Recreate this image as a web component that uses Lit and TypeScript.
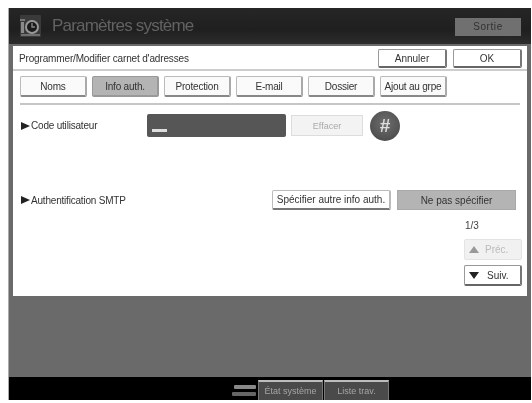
import { LitElement, html, css } from "lit";
import { customElement } from "lit/decorators.js";

@customElement("app-root")
export class AppRoot extends LitElement {
  static styles = css`
    :host {
      display: block;
      width: 532px;
      height: 403px;
      background: #fff;
      overflow: hidden;
      font-family: "Liberation Sans", Arial, sans-serif;
      color: #333;
    }
    .frame {
      margin: 8px 1px 0 9px;
      height: 392px;
      display: flex;
      flex-direction: column;
      background: #6a6a6a;
      filter: blur(0.7px);
      box-shadow: -1px 0 0 #aaa;
    }
    .header {
      height: 36px;
      flex: none;
      display: flex;
      align-items: center;
      background: linear-gradient(#262626, #1f1f1f 60%, #2c2c2c);
      padding: 0 10px 0 11px;
    }
    .logo { width: 21px; height: 24px; flex: none; }
    .title {
      margin-left: 11px;
      font-size: 17px;
      letter-spacing: -0.8px;
      color: #626262;
      white-space: nowrap;
    }
    .exit {
      margin-left: auto;
      margin-top: 1px;
      width: 66px;
      height: 18px;
      background: #707070;
      color: #303030;
      font-size: 10px;
      display: flex;
      align-items: center;
      justify-content: center;
      letter-spacing: 0.6px;
    }
    .panel {
      margin: 2px 4px 0 4px;
      height: 250px;
      flex: none;
      background: #fff;
      position: relative;
      display: flex;
      flex-direction: column;
    }
    .top {
      height: 25px;
      flex: none;
      box-sizing: border-box;
      border-bottom: 2px solid #ccc;
      display: flex;
      align-items: flex-start;
      padding: 3px 5px 0 6px;
      gap: 6px;
    }
    .caption {
      flex: 1;
      font-size: 10px;
      line-height: 19px;
      letter-spacing: -0.15px;
      color: #333;
      white-space: nowrap;
    }
    .btn {
      box-sizing: border-box;
      display: flex;
      align-items: center;
      justify-content: center;
      background: #fff;
      border: 1px solid #999;
      border-right: 2px solid #777;
      border-bottom: 2px solid #666;
      border-radius: 2px;
      font-size: 10px;
      color: #333;
      white-space: nowrap;
      flex: none;
    }
    .top .btn { width: 69px; height: 19px; }
    .tabs {
      display: flex;
      gap: 5px;
      margin: 5px 0 0 7px;
    }
    .tabs .btn { width: 67px; height: 21px; letter-spacing: -0.2px; background: #fafafa; border-color: #bbb; border-bottom-color: #888; border-right-color: #aaa; }
    .tabs .btn.sel { background: #b4b4b4; border-color: #999; }
    .rule { height: 2px; background: #c6c6c6; margin: 6px 7px 0 7px; flex: none; }
    .row { display: flex; align-items: center; }
    .label {
      font-size: 10px;
      letter-spacing: -0.2px;
      color: #333;
      display: flex;
      align-items: center;
      gap: 1px;
      white-space: nowrap;
    }
    .arrow { width: 0; height: 0; border-left: 9px solid #222; border-top: 4px solid transparent; border-bottom: 4px solid transparent; }
    .code { margin: 9px 0 0 8px; height: 23px; }
    .code .label { width: 126px; }
    .field {
      width: 139px;
      height: 23px;
      box-sizing: border-box;
      background: #565656;
      border-radius: 2px;
      display: flex;
      align-items: flex-end;
      padding: 0 0 5px 5px;
    }
    .cursor { width: 15px; height: 3px; background: #ddd; }
    .clear {
      width: 72px;
      height: 21px;
      margin-left: 5px;
      box-sizing: border-box;
      border: 1px solid #ddd;
      background: #f3f3f3;
      color: #aaa;
      font-size: 9px;
      display: flex;
      align-items: center;
      justify-content: center;
    }
    .hash {
      width: 30px;
      height: 30px;
      margin-left: 7px;
      border-radius: 50%;
      background: radial-gradient(circle at 50% 40%, #6e6e6e, #555 60%, #3e3e3e);
      color: #ddd;
      font-size: 19px;
      font-weight: bold;
      display: flex;
      align-items: center;
      justify-content: center;
      flex: none;
    }
    .smtp { margin: 53px 0 0 8px; height: 20px; }
    .smtp .label { width: 251px; }
    .smtp .btn { width: 119px; height: 20px; border-color: #bbb; border-bottom-color: #777; }
    .smtp .btn.none { width: 119px; margin-left: 6px; background: #b4b4b4; border: 1px solid #aaa; border-radius: 0; }
    .pager {
      margin: 8px 5px 0 auto;
      width: 58px;
      display: flex;
      flex-direction: column;
    }
    .count { font-size: 10px; color: #444; height: 21px; line-height: 16px; margin-left: 1px; }
    .nav {
      width: 58px;
      box-sizing: border-box;
      height: 21px;
      justify-content: flex-start;
      padding-left: 4px;
      gap: 8px;
    }
    .nav.off { background: #f1f1f1; border: 1px solid #e4e4e4; color: #bbb; margin-bottom: 5px; gap: 6px; }
    .up { width: 0; height: 0; border-left: 5px solid transparent; border-right: 5px solid transparent; border-bottom: 7px solid #999; }
    .down { width: 0; height: 0; border-left: 5px solid transparent; border-right: 5px solid transparent; border-top: 7px solid #222; }
    .spacer { flex: 1; }
    .bar {
      flex: none;
      height: 23px;
      background: #000;
      display: flex;
      align-items: flex-end;
      padding-left: 223px;
    }
    .status { display: flex; flex-direction: column; gap: 3px; width: 26px; margin-bottom: 4px; }
    .status i { display: block; height: 4px; background: #888; margin: 0 2px 0 2px; border-radius: 1px; }
    .status i + i { background: #666; margin-left: 0; }
    .bar-tab {
      width: 65px;
      height: 20px;
      box-sizing: border-box;
      margin-right: 1px;
      background: #4a4a4a;
      border-top: 2px solid #bdbdbd;
      border-left: 1px solid #777;
      border-right: 1px solid #777;
      color: #a5a5a5;
      font-size: 9px;
      display: flex;
      align-items: center;
      justify-content: center;
    }
  `;

  render() {
    return html`
      <div class="frame">
        <div class="header">
          <svg class="logo" viewBox="0 0 21 24">
            <rect x="0" y="1" width="21" height="22" rx="1" fill="#3a3a3a"/>
            <rect x="1" y="8" width="3" height="11" fill="#8a8a8a"/>
            <rect x="0" y="5" width="5" height="2" fill="#777"/>
            <circle cx="12" cy="13" r="6" fill="#1a1a1a" stroke="#999" stroke-width="2"/>
            <path d="M12 9v4h3" fill="none" stroke="#888" stroke-width="1.4"/>
            <rect x="1" y="20" width="19" height="2" fill="#707070"/>
          </svg>
          <span class="title">Paramètres système</span>
          <span class="exit">Sortie</span>
        </div>
        <div class="panel">
          <div class="top">
            <span class="caption">Programmer/Modifier carnet d'adresses</span>
            <span class="btn">Annuler</span>
            <span class="btn">OK</span>
          </div>
          <div class="tabs">
            <span class="btn">Noms</span>
            <span class="btn sel">Info auth.</span>
            <span class="btn">Protection</span>
            <span class="btn">E-mail</span>
            <span class="btn">Dossier</span>
            <span class="btn">Ajout au grpe</span>
          </div>
          <div class="rule"></div>
          <div class="row code">
            <span class="label"><i class="arrow"></i>Code utilisateur</span>
            <div class="field"><span class="cursor"></span></div>
            <span class="clear">Effacer</span>
            <span class="hash">#</span>
          </div>
          <div class="row smtp">
            <span class="label"><i class="arrow"></i>Authentification SMTP</span>
            <span class="btn">Spécifier autre info auth.</span>
            <span class="btn none">Ne pas spécifier</span>
          </div>
          <div class="pager">
            <span class="count">1/3</span>
            <span class="btn nav off"><i class="up"></i>Préc.</span>
            <span class="btn nav"><i class="down"></i>Suiv.</span>
          </div>
        </div>
        <div class="spacer"></div>
        <div class="bar">
          <div class="status"><i></i><i></i></div>
          <span class="bar-tab">État système</span>
          <span class="bar-tab">Liste trav.</span>
        </div>
      </div>
    `;
  }
}
